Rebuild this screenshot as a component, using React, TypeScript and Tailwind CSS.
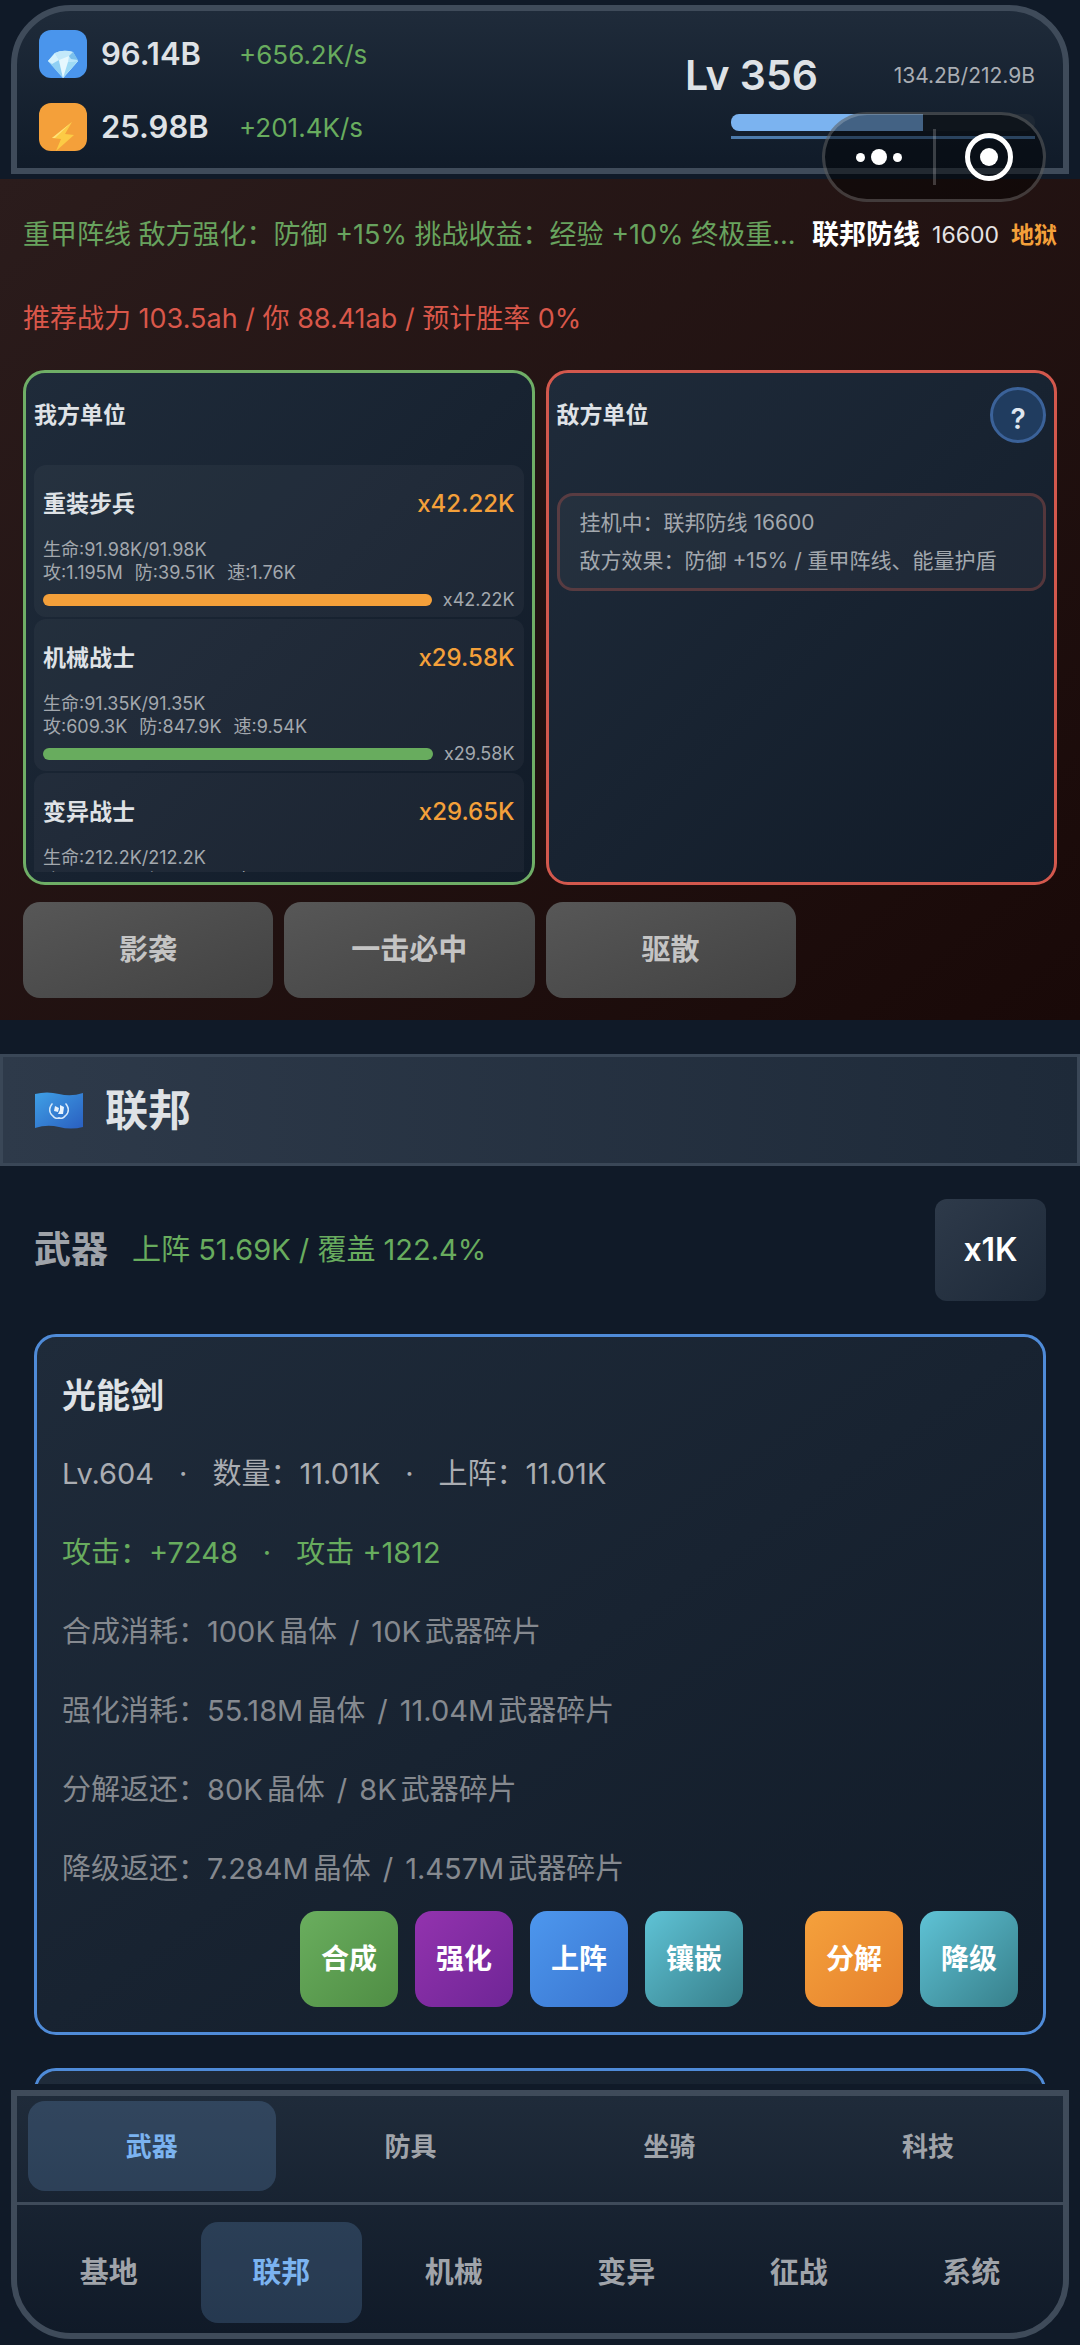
import { useState } from "react";
import clsx from "clsx";

type Unit = {
  name: string;
  count: string;
  hp: string;
  atk: string;
  def: string;
  spd: string;
  bar: string;
};

const units: Unit[] = [
  { name: "重装步兵", count: "x42.22K", hp: "91.98K/91.98K", atk: "1.195M", def: "39.51K", spd: "1.76K", bar: "bg-[#f4a03a]" },
  { name: "机械战士", count: "x29.58K", hp: "91.35K/91.35K", atk: "609.3K", def: "847.9K", spd: "9.54K", bar: "bg-[#68ac5e]" },
  { name: "变异战士", count: "x29.65K", hp: "212.2K/212.2K", atk: "402.6K", def: "318.5K", spd: "3.12K", bar: "bg-[#9c4fc4]" },
];

const skills = ["影袭", "一击必中", "驱散"];

const costs = [
  { label: "合成消耗：", crystals: "100K", shards: "10K" },
  { label: "强化消耗：", crystals: "55.18M", shards: "11.04M" },
  { label: "分解返还：", crystals: "80K", shards: "8K" },
  { label: "降级返还：", crystals: "7.284M", shards: "1.457M" },
];

const mainActions = [
  { label: "合成", color: "from-[#6aae5e] to-[#4f8d44]" },
  { label: "强化", color: "from-[#9333ae] to-[#6f2596]" },
  { label: "上阵", color: "from-[#4d97ee] to-[#3a75cf]" },
  { label: "镶嵌", color: "from-[#5fc3d6] to-[#377f8a]" },
];

const sideActions = [
  { label: "分解", color: "from-[#f5a13c] to-[#e5812d]" },
  { label: "降级", color: "from-[#5fc3d6] to-[#377f8a]" },
];

const subTabs = ["武器", "防具", "坐骑", "科技"];
const mainTabs = ["基地", "联邦", "机械", "变异", "征战", "系统"];

function GemIcon() {
  return (
    <svg viewBox="0 0 32 28" className="h-7 w-8" aria-hidden="true">
      <path d="M1 11 L8 3 Q16 -1 26 2 L31 11 L16 28 Z" fill="#b9e6fb" />
      <path d="M1 11 L8 3 L12 11 L16 28 Z" fill="#8fd0f4" />
      <path d="M1 11 L8 3 L12 10 L5 14 Z" fill="#d6f2fd" />
      <path d="M8 3 Q16 -1 26 2 L22 6 L12 10 Z" fill="#c3e9fa" />
      <path d="M12 10 L22 6 L21 12 L31 11 L16 28 Z" fill="#e6f8fe" />
      <path d="M21 12 L31 11 L16 28 Z" fill="#9fdbf5" />
      <path d="M22 6 L26 2 L31 10 L24 9 Z" fill="#7cc0ec" />
    </svg>
  );
}

function BoltIcon() {
  return (
    <svg viewBox="0 0 24 30" className="h-[30px] w-6" aria-hidden="true">
      <path d="M21 1 L1 17 L10 18 L5 30 L23 14 L14 13 Z" fill="#fccb45" />
      <path d="M21 1 L1 17 L4 17 Z" fill="#ffe27a" />
    </svg>
  );
}

function FlagIcon() {
  return (
    <svg viewBox="0 0 48 37" className="h-[37px] w-12" aria-hidden="true">
      <defs>
        <linearGradient id="flag" x1="0" y1="0" x2="1" y2="1">
          <stop offset="0" stopColor="#3fa0e6" />
          <stop offset="1" stopColor="#2a5fc0" />
        </linearGradient>
      </defs>
      <path d="M0 2 Q12 -1 24 2 T48 1 V35 Q36 38 24 35 T0 36 Z" fill="url(#flag)" />
      <g fill="none" stroke="#d5e8fa" strokeWidth="1.6" strokeLinecap="round">
        <path d="M17 12 Q12 19 18 24 Q20 27 24 26" strokeDasharray="2.5 0.8" />
        <path d="M31 12 Q36 19 30 24 Q28 27 24 26" strokeDasharray="2.5 0.8" />
      </g>
      <path d="M20 14 L24 16 L23 20 L19 19 Z M25 13 L29 15 L28 22 L23 22 L25 18 Z" fill="#e8f3fd" />
    </svg>
  );
}

function Resource({ icon, tint, value, rate }: { icon: React.ReactNode; tint: string; value: string; rate: string }) {
  return (
    <div className="flex h-12 items-center">
      <span className={clsx("flex size-12 items-end justify-center rounded-xl", tint)}>{icon}</span>
      <span className="ml-3.5 w-[138px] text-[31px] font-semibold text-[#dfe2e6]">{value}</span>
      <span className="text-[26px] text-[#68ac5e]">{rate}</span>
    </div>
  );
}

function Header() {
  return (
    <header className="relative mx-[11px] mt-[5px] mb-[5px] flex justify-between rounded-t-[60px] border-6 border-[#3f4b5a] bg-linear-to-b from-[#1f2b3a] to-[#101b29] pt-[19px] pr-7 pb-[17px] pl-[22px]">
      <div className="flex flex-col gap-[25px]">
        <Resource icon={<GemIcon />} tint="bg-[#4a95ec]" value="96.14B" rate="+656.2K/s" />
        <Resource icon={<BoltIcon />} tint="bg-[#f4a03a]" value="25.98B" rate="+201.4K/s" />
      </div>
      <div className="flex w-[350px] flex-col pt-[22px]">
        <div className="flex h-12 items-center justify-between">
          <span className="text-[41px] font-semibold text-[#dfe2e6]">Lv 356</span>
          <span className="text-[21px] text-[#a9adb3]">134.2B/212.9B</span>
        </div>
        <div className="mt-3.5 ml-[46px] h-[17px] overflow-hidden rounded-lg bg-[#1d2733]">
          <div className="h-full w-[63%] bg-[#7bb3f0]" />
        </div>
        <div className="mt-[5px] ml-[46px] h-[3px] bg-[#4d7bab]" />
      </div>

      {/* floating mini-program capsule */}
      <div className="absolute top-[101px] right-[17px] z-10 flex h-[90px] w-[224px] items-center rounded-full border-3 border-white/20 bg-black/45">
        <button type="button" aria-label="更多" className="flex flex-1 items-center justify-center gap-1.5">
          <span className="size-[9px] rounded-full bg-white" />
          <span className="size-4 rounded-full bg-white" />
          <span className="size-[9px] rounded-full bg-white" />
        </button>
        <span className="h-14 w-[3px] bg-white/20" />
        <button type="button" aria-label="关闭" className="flex flex-1 items-center justify-center">
          <span className="flex size-12 items-center justify-center rounded-full border-5 border-white">
            <span className="size-[18px] rounded-full bg-white" />
          </span>
        </button>
      </div>
    </header>
  );
}

function UnitCard({ unit }: { unit: Unit }) {
  return (
    <li className="rounded-xl bg-white/4 px-[9px] pt-[5px] pb-1.5">
      <div className="flex h-[68px] items-center justify-between">
        <span className="text-[23px] font-semibold text-[#dfe2e6]">{unit.name}</span>
        <span className="text-[24px] font-medium text-[#f4a03a]">{unit.count}</span>
      </div>
      <div className="text-[18px] leading-[23px] text-[#a3a8ae]">
        <p>生命:{unit.hp}</p>
        <p className="flex gap-3">
          <span>攻:{unit.atk}</span>
          <span>防:{unit.def}</span>
          <span>速:{unit.spd}</span>
        </p>
      </div>
      <div className="mt-1 flex items-center gap-[11px]">
        <div className={clsx("h-3 flex-1 rounded-full", unit.bar)} />
        <span className="text-[18px] leading-[23px] text-[#a3a8ae]">{unit.count}</span>
      </div>
    </li>
  );
}

function Battle() {
  return (
    <section className="bg-linear-to-br from-[#2b1c1c] to-[#190908] px-[23px] pt-[17px] pb-[22px]">
      <div className="flex items-center justify-between gap-3 leading-[78px] whitespace-nowrap">
        <p className="text-[27px] text-[#68a35e]">
          重甲阵线 敌方强化：防御 +15% 挑战收益：经验 +10% 终极重...
        </p>
        <p className="flex gap-3">
          <b className="text-[27px] font-bold text-white">联邦防线</b>
          <span className="text-[23px] text-[#e6e3e3]">16600</span>
          <span className="text-[23px] font-semibold text-[#f4a03a]">地狱</span>
        </p>
      </div>
      <p className="mt-1.5 text-[27px] leading-[78px] text-[#d9574a]">推荐战力 103.5ah / 你 88.41ab / 预计胜率 0%</p>

      <div className="mt-3 grid grid-cols-2 gap-[11px]">
        <div className="rounded-[22px] border-3 border-[#6fae66] bg-linear-to-br from-[#1f2b3a] to-[#111b28] p-2 pb-2.5">
          <h2 className="flex h-[68px] items-center text-[23px] font-semibold text-[#dfe2e6]">我方单位</h2>
          <ul className="mt-4 flex max-h-[407px] flex-col gap-0.5 overflow-hidden">
            {units.map((u) => (
              <UnitCard key={u.name} unit={u} />
            ))}
          </ul>
        </div>
        <div className="rounded-[22px] border-3 border-[#d3584d] bg-linear-to-br from-[#1f2b3a] to-[#111b28] p-2">
          <div className="flex h-[68px] items-center justify-between">
            <h2 className="text-[23px] font-semibold text-[#dfe2e6]">敌方单位</h2>
            <button
              type="button"
              className="size-14 rounded-full border-3 border-[#3b6299] bg-[#203c5f] pt-2 text-[28px] leading-none font-semibold text-[#dfe6ef]"
            >
              ?
            </button>
          </div>
          <div className="mt-11 rounded-2xl border-3 border-[#d3584d]/30 bg-white/4 px-5 py-2 text-[21px] leading-[38px] text-[#a3a8ae]">
            <p>挂机中：联邦防线 16600</p>
            <p>敌方效果：防御 +15% / 重甲阵线、能量护盾</p>
          </div>
        </div>
      </div>

      <div className="mt-[17px] grid grid-cols-4 gap-[11px]">
        {skills.map((s) => (
          <button
            key={s}
            type="button"
            className="h-24 rounded-[17px] bg-linear-to-br from-[#575757] to-[#424242] text-[29px] font-semibold text-[#c4c4c4]"
          >
            {s}
          </button>
        ))}
      </div>
    </section>
  );
}

function ActionButton({ label, color }: { label: string; color: string }) {
  return (
    <button type="button" className={clsx("h-24 w-[98px] rounded-[17px] bg-linear-to-br text-[28px] font-semibold text-white", color)}>
      {label}
    </button>
  );
}

function WeaponCard() {
  return (
    <article className="rounded-[22px] border-3 border-[#4f8bd8] bg-linear-to-br from-[#1f2b3a] to-[#111b28] px-[25px] pt-5 pb-[25px]">
      <h3 className="text-[34px] leading-[77px] font-semibold text-[#dfe2e6]">光能剑</h3>
      <div className="text-[29px] leading-[79px] text-[#85898f]">
        <p className="flex gap-[25px] text-[#aaadb2]">
          <span>Lv.604</span>
          <span>·</span>
          <span>数量：11.01K</span>
          <span>·</span>
          <span>上阵：11.01K</span>
        </p>
        <p className="flex gap-[25px] text-[#68ac5e]">
          <span>攻击：+7248</span>
          <span>·</span>
          <span>攻击 +1812</span>
        </p>
        {costs.map((c) => (
          <p key={c.label} className="flex">
            <span>{c.label}</span>
            <span className="mr-1">{c.crystals}</span>
            <span>晶体</span>
            <span className="mx-3">/</span>
            <span className="mr-1">{c.shards}</span>
            <span>武器碎片</span>
          </p>
        ))}
      </div>
      <div className="mt-[3px] flex justify-end gap-[62px]">
        <div className="flex gap-[17px]">
          {mainActions.map((a) => (
            <ActionButton key={a.label} {...a} />
          ))}
        </div>
        <div className="flex gap-[17px]">
          {sideActions.map((a) => (
            <ActionButton key={a.label} {...a} />
          ))}
        </div>
      </div>
    </article>
  );
}

export default function App() {
  const [subTab, setSubTab] = useState("武器");
  const [mainTab, setMainTab] = useState("联邦");

  return (
    <div
      lang="zh-CN"
      className="flex h-screen flex-col overflow-hidden bg-[#101a28] font-['Inter','Noto_Sans_CJK_SC',sans-serif]"
    >
      <Header />
      <Battle />

      <main className="mt-[34px] min-h-0 flex-1 overflow-hidden">
        <div className="flex h-28 items-center gap-[22px] border-3 border-[#3a4757] bg-linear-to-r from-[#2e3a4a] to-[#1e2a39] px-8">
          <FlagIcon />
          <h1 className="text-[43px] font-bold text-[#dfe2e6]">联邦</h1>
        </div>
        <div className="px-[34px]">
          <div className="flex items-center py-[33px]">
            <h2 className="text-[37px] font-semibold text-[#9fa3a9]">武器</h2>
            <span className="ml-6 text-[29px] text-[#68ac5e]">上阵 51.69K / 覆盖 122.4%</span>
            <button
              type="button"
              className="ml-auto h-[102px] w-[111px] rounded-xl bg-linear-to-br from-[#2e3a4a] to-[#1e2a39] text-[32px] font-semibold text-white"
            >
              x1K
            </button>
          </div>
          <WeaponCard />
          <div className="mt-[33px] h-40 rounded-[22px] border-3 border-[#4f8bd8] bg-linear-to-r from-[#1f2b3a] to-[#141f2c]" />
        </div>
      </main>

      <footer className="mx-[11px] my-1.5 rounded-b-[60px] border-6 border-[#3f4b5a] bg-linear-to-b from-[#1f2b3a] to-[#101a28]">
        <nav className="grid grid-cols-4 gap-[11px] border-b-3 border-[#3f4b5a] px-[11px] pt-[5px] pb-[11px]">
          {subTabs.map((t) => (
            <button
              key={t}
              type="button"
              onClick={() => setSubTab(t)}
              className={clsx(
                "h-[90px] rounded-[17px] text-[26px] font-semibold",
                t === subTab ? "bg-[#7bb3f0]/20 text-[#7bb3f0]" : "text-[#a0a4aa]"
              )}
            >
              {t}
            </button>
          ))}
        </nav>
        <nav className="grid grid-cols-6 gap-[11px] px-[11px] pt-[17px] pb-2.5">
          {mainTabs.map((t) => (
            <button
              key={t}
              type="button"
              onClick={() => setMainTab(t)}
              className={clsx(
                "h-[101px] rounded-[17px] text-[29px] font-semibold",
                t === mainTab ? "bg-[#7bb3f0]/20 text-[#7bb3f0]" : "text-[#a0a4aa]"
              )}
            >
              {t}
            </button>
          ))}
        </nav>
      </footer>
    </div>
  );
}
